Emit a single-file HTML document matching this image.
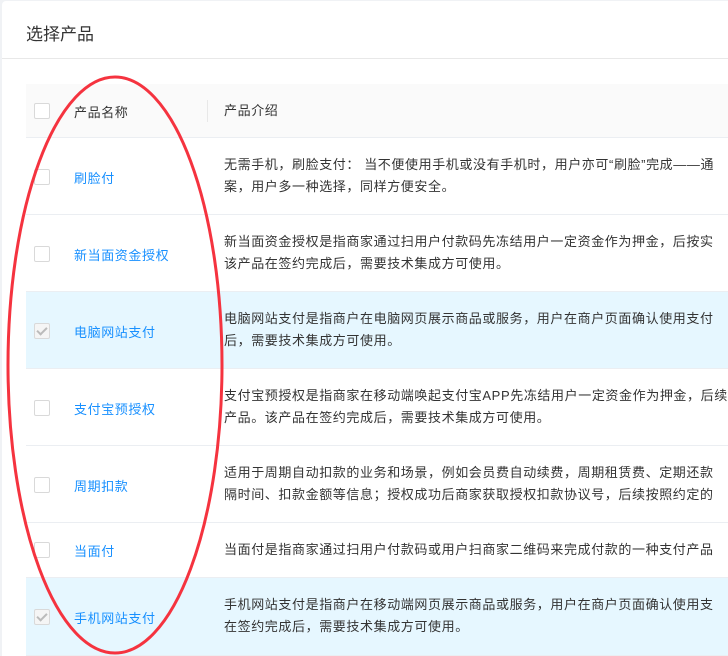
<!DOCTYPE html>
<html><head><meta charset="utf-8"><style>
*{margin:0;padding:0;box-sizing:border-box}
html,body{width:728px;height:656px;overflow:hidden}
body{background:#f0f2f5;font-family:"Liberation Sans","Noto Sans CJK SC",sans-serif;position:relative}
.card{position:absolute;left:2px;top:1px;width:740px;height:700px;background:#fff;border-radius:4px}
.title{position:absolute;left:24px;top:19px;font-size:17px;color:#333}
.hr{position:absolute;left:0;top:57px;width:740px;height:1px;background:#e8e8e8}
.row{position:absolute;left:26px;width:720px;border-bottom:1px solid #ebeef2}
.cb{position:absolute;left:8px;width:16px;height:16px;border:1px solid #d9d9d9;border-radius:2px;background:#fff}
.cb.on{background:#f5f5f5}
.cb.on:after{content:"";position:absolute;left:4px;top:1px;width:4px;height:8px;border:solid #bbb;border-width:0 2px 2px 0;transform:rotate(45deg)}
.name{position:absolute;left:48px;font-size:13px;letter-spacing:0.6px;color:#1890ff}
.desc{position:absolute;left:198px;font-size:13px;letter-spacing:0.6px;color:#333;line-height:22px;white-space:nowrap}
.sel{background:#e6f7ff}
</style></head><body>
<div class="card">
<div class="title">选择产品</div>
<div class="hr"></div>
</div>
<div class="row" style="top:84px;height:54px;background:#fafafa">
<div class="cb" style="top:19px"></div>
<div class="name" style="top:18px;color:#333">产品名称</div>
<div style="position:absolute;left:181px;top:16px;width:1px;height:22px;background:#e8e8e8"></div>
<div class="desc" style="top:16px">产品介绍</div>
</div>
<div class="row" style="top:138px;height:77px"><div class="cb" style="top:31px"></div><div class="name" style="top:30px">刷脸付</div><div class="desc" style="top:16px">无需手机，刷脸支付： 当不便使用手机或没有手机时，用户亦可“刷脸”完成——通<br>案，用户多一种选择，同样方便安全。</div></div>
<div class="row" style="top:215px;height:77px"><div class="cb" style="top:31px"></div><div class="name" style="top:30px">新当面资金授权</div><div class="desc" style="top:16px">新当面资金授权是指商家通过扫用户付款码先冻结用户一定资金作为押金，后按实<br>该产品在签约完成后，需要技术集成方可使用。</div></div>
<div class="row sel" style="top:292px;height:77px"><div class="cb on" style="top:31px"></div><div class="name" style="top:30px">电脑网站支付</div><div class="desc" style="top:16px">电脑网站支付是指商户在电脑网页展示商品或服务，用户在商户页面确认使用支付<br>后，需要技术集成方可使用。</div></div>
<div class="row" style="top:369px;height:77px"><div class="cb" style="top:31px"></div><div class="name" style="top:30px">支付宝预授权</div><div class="desc" style="top:16px">支付宝预授权是指商家在移动端唤起支付宝APP先冻结用户一定资金作为押金，后续<br>产品。该产品在签约完成后，需要技术集成方可使用。</div></div>
<div class="row" style="top:446px;height:77px"><div class="cb" style="top:31px"></div><div class="name" style="top:30px">周期扣款</div><div class="desc" style="top:16px">适用于周期自动扣款的业务和场景，例如会员费自动续费，周期租赁费、定期还款<br>隔时间、扣款金额等信息；授权成功后商家获取授权扣款协议号，后续按照约定的</div></div>
<div class="row" style="top:523px;height:55px"><div class="cb" style="top:19px"></div><div class="name" style="top:18px">当面付</div><div class="desc" style="top:16px">当面付是指商家通过扫用户付款码或用户扫商家二维码来完成付款的一种支付产品</div></div>
<div class="row sel" style="top:578px;height:78px"><div class="cb on" style="top:31px"></div><div class="name" style="top:30px">手机网站支付</div><div class="desc" style="top:16px">手机网站支付是指商户在移动端网页展示商品或服务，用户在商户页面确认使用支<br>在签约完成后，需要技术集成方可使用。</div></div>
<svg style="position:absolute;left:0;top:0" width="728" height="656"><ellipse cx="115" cy="365" rx="107" ry="288" fill="none" stroke="#f5333f" stroke-width="3"/></svg>
</body></html>
